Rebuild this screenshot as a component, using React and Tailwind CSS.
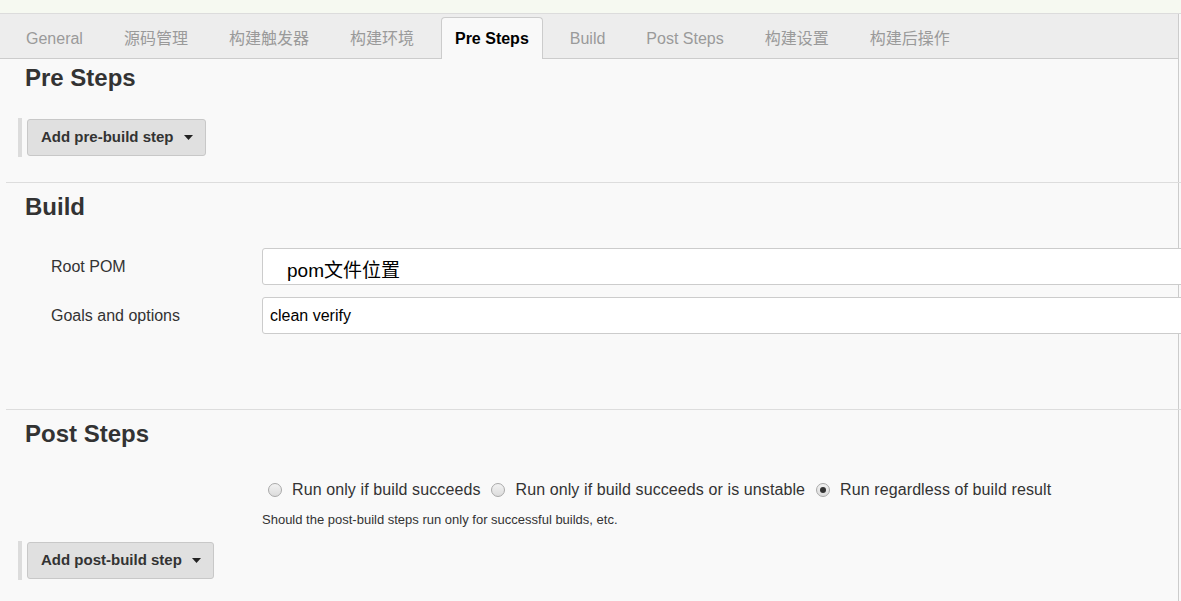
import React, { useState } from "react";

const tabs = [
  "General",
  "源码管理",
  "构建触发器",
  "构建环境",
  "Pre Steps",
  "Build",
  "Post Steps",
  "构建设置",
  "构建后操作",
];

const runOptions = [
  "Run only if build succeeds",
  "Run only if build succeeds or is unstable",
  "Run regardless of build result",
];

const Caret = () => (
  <svg width="9" height="5" viewBox="0 0 9 5" className="ml-[10px]">
    <path d="M0 0 L9 0 L4.5 5 Z" fill="#222" />
  </svg>
);

const StepButton = ({ label }) => (
  <div className="ml-[18px] flex h-[39px] items-center">
    <div className="h-full w-[4px] bg-[#dcdcdc]" />
    <button
      type="button"
      className="ml-[5px] flex h-[37px] items-center rounded-[3px] border border-[#c8c8c8] bg-[#e0e0e0] pl-[13px] pr-[12px] text-[15px] font-bold text-[#333]"
    >
      {label}
      <Caret />
    </button>
  </div>
);

const SectionTitle = ({ children }) => (
  <h2 className="h-[28px] pl-[25px] text-[24px] font-bold leading-[28px] text-[#333]">
    {children}
  </h2>
);

const Divider = () => <div className="ml-[6px] w-[1175px] border-t border-[#dddddd]" />;

const Radio = ({ checked }) => (
  <span className="flex h-[14px] w-[14px] shrink-0 items-center justify-center rounded-full border border-[#a9a9a9] bg-gradient-to-b from-[#f2f2f2] to-[#dcdcdc]">
    {checked && <span className="h-[6px] w-[6px] rounded-full bg-[#333]" />}
  </span>
);

export default function App() {
  const [active, setActive] = useState("Pre Steps");
  const [runMode, setRunMode] = useState(2);

  return (
    <div
      className="h-[601px] w-[1181px] overflow-hidden bg-[#f9f9f9]"
      style={{ fontFamily: '"Liberation Sans", Arial, "Noto Sans CJK SC", sans-serif' }}
    >
      <div className="h-[14px] border-b border-[#dcdcdc] bg-[#f6f9f1]" />

      <div className="w-[1179px] border-r border-[#cccccc]">
        <nav className="flex h-[45px] items-end gap-[13px] border-b border-[#cccccc] bg-[#ededed] pl-[12px]">
          {tabs.map((tab) =>
            tab === active ? (
              <div
                key={tab}
                onClick={() => setActive(tab)}
                className="-mb-px flex h-[42px] items-center rounded-t-[4px] border border-b-0 border-[#cccccc] bg-[#f9f9f9] px-[13px] pt-[1px] text-[16px] font-bold text-black"
              >
                {tab}
              </div>
            ) : (
              <div
                key={tab}
                onClick={() => setActive(tab)}
                className="flex h-[41px] cursor-pointer items-center px-[14px] pt-[2px] text-[16px] text-[#9a9a9a]"
              >
                {tab}
              </div>
            )
          )}
        </nav>

        <div className="h-[542px]">
          {/* Pre Steps */}
          <div className="pt-[5px]">
            <SectionTitle>Pre Steps</SectionTitle>
            <div className="mt-[26px]">
              <StepButton label="Add pre-build step" />
            </div>
          </div>

          <div className="mt-[25px]">
            <Divider />
          </div>

          {/* Build */}
          <div className="pt-[10px]">
            <SectionTitle>Build</SectionTitle>
            <div className="mt-[27px] flex flex-col gap-[12px]">
              <div className="flex items-center">
                <label className="w-[262px] shrink-0 pl-[51px] text-[16px] text-[#333]">Root POM</label>
                <input
                  readOnly
                  value="pom文件位置"
                  className="h-[37px] w-[940px] shrink-0 rounded-[3px] border border-[#cccccc] bg-white pl-[24px] pt-[4px] text-[19px] text-black"
                />
              </div>
              <div className="flex items-center">
                <label className="w-[262px] shrink-0 pl-[51px] text-[16px] text-[#333]">Goals and options</label>
                <input
                  readOnly
                  value="clean verify"
                  className="h-[37px] w-[940px] shrink-0 rounded-[3px] border border-[#cccccc] bg-white pl-[7px] text-[16px] text-black"
                />
              </div>
            </div>
          </div>

          <div className="mt-[75px]">
            <Divider />
          </div>

          {/* Post Steps */}
          <div className="pt-[10px]">
            <SectionTitle>Post Steps</SectionTitle>
            <div className="mt-[32px] flex h-[20px] items-center pl-[262px]">
              {runOptions.map((opt, i) => (
                <label
                  key={opt}
                  onClick={() => setRunMode(i)}
                  className="ml-[6px] mr-[5px] flex shrink-0 cursor-pointer items-center text-[16px] tracking-[0.1px] text-[#333]"
                >
                  <Radio checked={runMode === i} />
                  <span className="ml-[10px]">{opt}</span>
                </label>
              ))}
            </div>
            <p className="mt-[12px] pl-[262px] text-[13px] leading-[16px] text-[#333]">
              Should the post-build steps run only for successful builds, etc.
            </p>
            <div className="mt-[13px]">
              <StepButton label="Add post-build step" />
            </div>
          </div>
        </div>
      </div>
    </div>
  );
}
